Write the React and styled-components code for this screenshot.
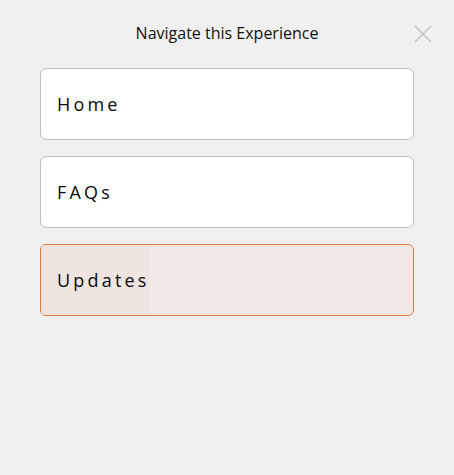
import React from "react";
import styled, { createGlobalStyle } from "styled-components";

const GlobalStyle = createGlobalStyle`
  html, body {
    margin: 0;
    padding: 0;
    background: #f0f0f0;
  }
  body {
    font-family: "Open Sans", "Noto Sans", sans-serif;
  }
`;

const items = [
  { id: "home", label: "Home" },
  { id: "faqs", label: "FAQs" },
  { id: "updates", label: "Updates", active: true },
];

const App = () => {
  return (
    <>
      <GlobalStyle />
      <Panel>
        <Header>
          <Title>Navigate this Experience</Title>
          <CloseButton aria-label="Close">
            <svg width="18" height="18" viewBox="0 0 18 18">
              <path
                d="M1 1 L17 17 M17 1 L1 17"
                stroke="#c3c3c3"
                strokeWidth="1.6"
                fill="none"
              />
            </svg>
          </CloseButton>
        </Header>
        <NavList>
          {items.map((item) => (
            <NavItem key={item.id} $active={item.active}>
              <Label $active={item.active}>{item.label}</Label>
            </NavItem>
          ))}
        </NavList>
      </Panel>
    </>
  );
};

export default App;

const Panel = styled.div`
  width: 454px;
  height: 475px;
  box-sizing: border-box;
  padding: 0 40px;
`;

const Header = styled.div`
  position: relative;
  height: 68px;
  display: flex;
  justify-content: center;
  padding-top: 22px;
  box-sizing: border-box;
`;

const Title = styled.h2`
  margin: 0;
  font-size: 16px;
  font-weight: 400;
  color: #111;
  line-height: 22px;
`;

const CloseButton = styled.button`
  position: absolute;
  right: -18px;
  top: 25px;
  padding: 0;
  border: 0;
  background: none;
  width: 18px;
  height: 18px;
  cursor: pointer;
`;

const NavList = styled.div`
  display: flex;
  flex-direction: column;
  gap: 16px;
`;

const NavItem = styled.div`
  height: 72px;
  box-sizing: border-box;
  display: flex;
  align-items: stretch;
  border-radius: 6px;
  overflow: hidden;
  border: 1px solid ${(p) => (p.$active ? "#df7a3e" : "#b9bec9")};
  background: ${(p) => (p.$active ? "#f1e9e6" : "#ffffff")};
  cursor: pointer;
`;

const Label = styled.span`
  display: flex;
  align-items: center;
  padding: 0 0 0 16px;
  font-size: 18px;
  font-weight: 500;
  letter-spacing: 3.2px;
  color: #0a0a0a;
  background: ${(p) => (p.$active ? "#efe4df" : "transparent")};
`;
